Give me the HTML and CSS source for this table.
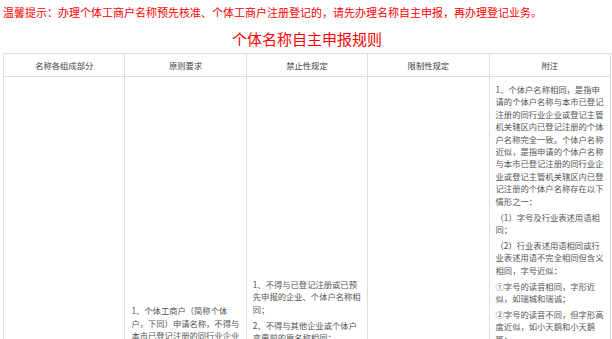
FILE: index.html
```html
<!DOCTYPE html>
<html lang="zh-CN">
<head>
<meta charset="utf-8">
<title>个体名称自主申报规则</title>
<link rel="stylesheet" href="styles.css">
</head>
<body>
<div class="page">
  <p class="notice">温馨提示：办理个体工商户名称预先核准、个体工商户注册登记的，请先办理名称自主申报，再办理登记业务。</p>
  <h1 class="title">个体名称自主申报规则</h1>
  <table class="rules">
    <thead>
      <tr>
        <th>名称各组成部分</th>
        <th>原则要求</th>
        <th>禁止性规定</th>
        <th>限制性规定</th>
        <th>附注</th>
      </tr>
    </thead>
    <tbody>
      <tr>
        <td></td>
        <td>
          <p>1、个体工商户（简称个体户，下同）申请名称，不得与本市已登记注册的同行业企业名称或者登记主管机关辖区内已登记注册的同行业个体户名称相同或近似。</p>
          <p>2、个体户名称应当由行政区划、字号、行业、组织形式依次组成。</p>
        </td>
        <td>
          <p>1、不得与已登记注册或已预先申报的企业、个体户名称相同；</p>
          <p>2、不得与其他企业或个体户变更前的原名称相同；</p>
          <p>3、不得与已被撤销、吊销营业执照的企业、个体户名称相同，不得与已注销登记的企业、个体户名称相同；不得含有有损于国家、社会公共利益的内容和文字，不得含有可能对公众造成欺骗或者误解的内容和文字。</p>
        </td>
        <td></td>
        <td>
          <p>1、个体户名称相同，是指申请的个体户名称与本市已登记注册的同行业企业或登记主管机关辖区内已登记注册的个体户名称完全一致。个体户名称近似，是指申请的个体户名称与本市已登记注册的同行业企业或登记主管机关辖区内已登记注册的个体户名称存在以下情形之一：</p>
          <p>（1）字号及行业表述用语相同；</p>
          <p>（2）行业表述用语相同或行业表述用语不完全相同但含义相同，字号近似：</p>
          <p>①字号的读音相同，字形近似，如瑞城和瑞诚；</p>
          <p>②字号的读音不同，但字形高度近似，如小天鹅和小天鹅等；</p>
          <p>③字号的读音相同，字形不同，但字号中含有相同的字词且顺序相同，如天地和天帝等情形。</p>
          <p>2、个体户名称中的行政区划是指个体户所在地县级以上行政区划名称，个体户名称可以不使用行政区划，但应当在名称中使用字号；申请的字号应当由两个以上汉字组成，不得使用汉语拼音、字母、外国文字、阿拉伯数字，行政区划不得用作字号。</p>
          <p>3、个体户名称中的行业表述应当反映其主要经营活动内容或者经营特点，行业用语不得与其经营范围不一致；个体户名称中的组织形式可以使用“厂”“店”“馆”“部”“行”“中心”“工作室”等字样，但不得使用“企业”“公司”和“农民专业合作社”字样，不得使用无关字样。</p>
        </td>
      </tr>
    </tbody>
  </table>
</div>
</body>
</html>
```

FILE: styles.css
```css
html, body {
  margin: 0;
  padding: 0;
  background: #fff;
}
body {
  font-family: "Noto Sans CJK SC", "Noto Sans", sans-serif;
}
.page {
  padding: 4px 1px 0 3px;
}
.notice {
  margin: 0;
  font-size: 11px;
  line-height: 17px;
  color: #f00;
  white-space: nowrap;
}
.title {
  margin: 7px 0 4px;
  font-size: 15px;
  line-height: 21px;
  font-weight: normal;
  color: #f00;
  text-align: center;
}
.rules {
  width: 608px;
  border-collapse: collapse;
  table-layout: fixed;
  font-size: 8.3px;
  color: #555;
}
.rules th,
.rules td {
  border: 1px solid #ddd;
}
.rules th {
  font-weight: normal;
  line-height: 14px;
  padding: 4px 6px;
  text-align: center;
  color: #444;
}
.rules td {
  padding: 6px 6px;
  line-height: 12.4px;
  vertical-align: middle;
  text-align: left;
}
.rules td p {
  margin: 0 0 3.5px;
}
.rules td p:last-child {
  margin-bottom: 0;
}
```
